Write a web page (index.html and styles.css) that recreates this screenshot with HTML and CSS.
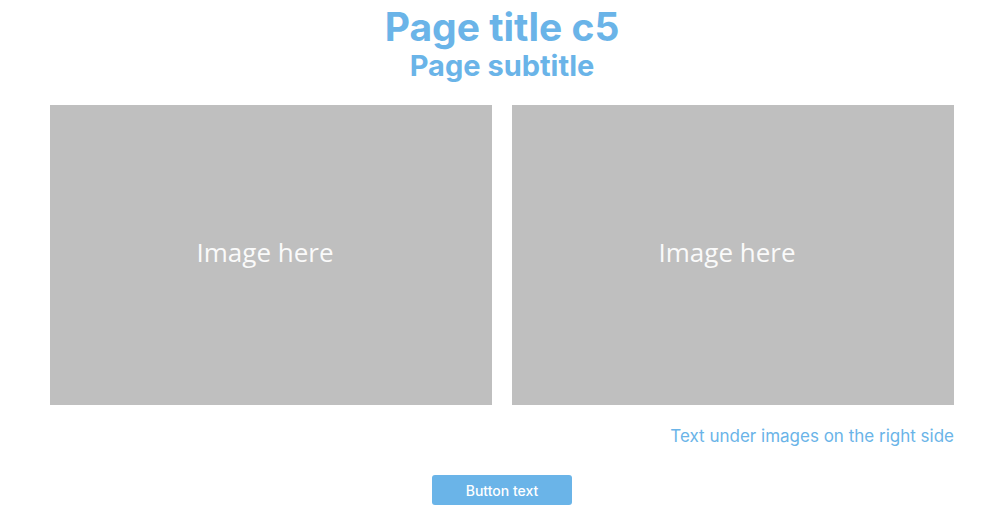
FILE: index.html
```html
<!DOCTYPE html>
<html>
<head>
<meta charset="utf-8">
<link rel="stylesheet" href="styles.css">
</head>
<body>
<div class="page">
  <header class="head">
    <h1 class="title">Page title c5</h1>
    <h2 class="subtitle">Page subtitle</h2>
  </header>
  <div class="images">
    <div class="img"><span>Image here</span></div>
    <div class="img"><span>Image here</span></div>
  </div>
  <p class="note">Text under images on the right side</p>
  <div class="actions">
    <button class="btn">Button text</button>
  </div>
</div>
</body>
</html>
```
FILE: styles.css
```css
* { box-sizing: border-box; }
html, body { margin: 0; padding: 0; background: #fff; }
body { font-family: "Inter", "Liberation Sans", sans-serif; }
.page { padding: 0 51px 0 50px; }
.head { text-align: center; color: #6ab4e8; padding-top: 4px; }
.title { margin: 0; font-size: 39px; font-weight: 700; line-height: 46px; letter-spacing: 0; }
.subtitle { margin: 0; font-size: 29px; font-weight: 700; line-height: 32px; }
.images { display: grid; grid-template-columns: 1fr 1fr; gap: 20px; margin-top: 23px; }
.img { height: 300px; background: #bfbfbf; display: flex; align-items: center; justify-content: center; }
.img span { color: #fafafa; font-family: "Open Sans", sans-serif; font-size: 26px; margin: 0 12px 6px 0; }
.note { margin: 19px 0 0; text-align: right; color: #6ab4e8; font-size: 17px; line-height: 24px; }
.actions { display: flex; justify-content: center; margin-top: 27px; }
.btn { width: 140px; height: 30px; border: 0; border-radius: 3px; background: #6ab4e8; color: #fff; font-family: "Inter", sans-serif; font-size: 14px; font-weight: 500; }
```
